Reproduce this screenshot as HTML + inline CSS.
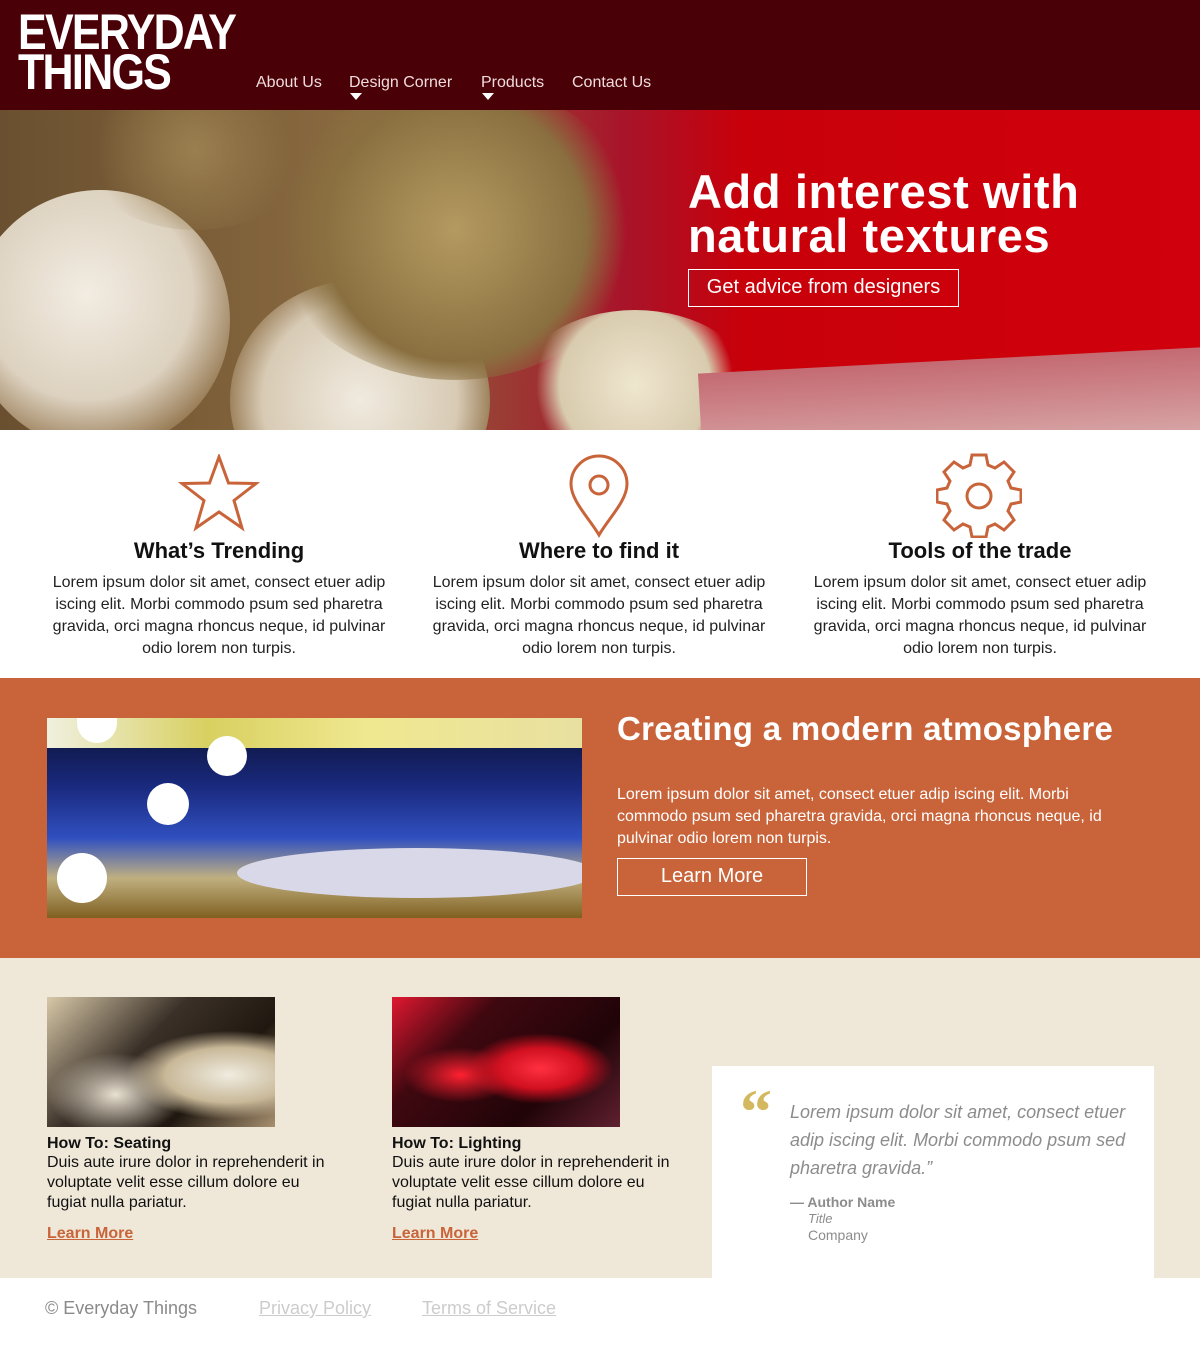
<!DOCTYPE html>
<html><head><meta charset="utf-8"><style>
*{margin:0;padding:0;box-sizing:border-box}
body{width:1200px;height:1350px;overflow:hidden;font-family:"Liberation Sans",sans-serif;background:#fff;position:relative}
.abs{position:absolute}
header{position:absolute;left:0;top:0;width:1200px;height:110px;background:#4a0007}
.logo{position:absolute;left:18px;top:12px;color:#fff;font-weight:bold;font-size:50px;line-height:40px;letter-spacing:-2px;transform:scaleX(.86);transform-origin:left top}
nav a{position:absolute;top:74px;color:#f0dcdc;font-size:16px;text-decoration:none}
.tri{position:absolute;top:93px;width:0;height:0;border-left:6px solid transparent;border-right:6px solid transparent;border-top:7px solid #fff}
.hero{position:absolute;left:0;top:110px;width:1200px;height:320px;overflow:hidden;
background:linear-gradient(90deg,#6a5030 0%,#8a6a40 30%,#a8142a 52%,#c8000a 62%,#d0000c 100%)}
.feat{position:absolute;top:538px;width:350px;text-align:center}
.feat h3{font-size:22px;color:#111;margin-bottom:8px}
.feat p{font-size:16px;line-height:22px;color:#222}
.orange{position:absolute;left:0;top:678px;width:1200px;height:280px;background:#c9643a}
.beige{position:absolute;left:0;top:958px;width:1200px;height:320px;background:#efe8d9}
.card h4{font-size:16px;color:#111;margin-top:8px}
.card p{font-size:16px;line-height:20px;color:#111}
.card a{display:block;margin-top:12px;color:#c9643a;font-weight:bold;font-size:16px;text-decoration:underline}
</style></head><body>
<div class="hero">
 <div class="abs" style="left:-30px;top:80px;width:260px;height:260px;border-radius:50%;background:radial-gradient(circle at 45% 40%,#f2ece2 0,#ddd2c0 50%,#8a6a40 80%)"></div>
 <div class="abs" style="left:230px;top:170px;width:260px;height:240px;border-radius:50%;background:radial-gradient(circle at 50% 50%,#f0eadf 0,#d8cbb5 55%,#8a6a40 80%)"></div>
 <div class="abs" style="left:270px;top:-30px;width:370px;height:300px;border-radius:50%;background:radial-gradient(circle,#b49a60 0,#8a7040 55%,rgba(120,90,50,0) 72%)"></div>
 <div class="abs" style="left:80px;top:-40px;width:230px;height:160px;border-radius:50%;background:radial-gradient(circle,#9a8050 0,rgba(120,90,50,0) 70%)"></div>
 <div class="abs" style="left:520px;top:200px;width:230px;height:150px;border-radius:50%;background:radial-gradient(circle,#efe6cf 0,#d8cbae 55%,rgba(200,180,150,0) 72%)"></div>
 <div class="abs" style="left:700px;top:250px;width:520px;height:90px;background:linear-gradient(180deg,#c46a72,#d8a8a8);transform:rotate(-3deg)"></div>
 <div class="abs" style="left:688px;top:60px;color:#fff;font-weight:bold;font-size:47px;line-height:44px;letter-spacing:.6px">Add interest with<br>natural textures</div>
 <div class="abs" style="left:688px;top:159px;width:271px;height:38px;border:1.5px solid #fff;color:#fff;font-size:20px;line-height:35px;text-align:center">Get advice from designers</div>
</div>
<header>
 <div class="logo">EVERYDAY<br>THINGS</div>
 <nav><a style="left:256px">About Us</a><a style="left:349px">Design Corner</a><a style="left:481px">Products</a><a style="left:572px">Contact Us</a></nav>
 <div class="tri" style="left:350px"></div><div class="tri" style="left:482px"></div>
</header>
<svg class="abs" style="left:178px;top:454px" width="82" height="78" viewBox="0 0 82 78"><polygon points="41,3 50.5,29 78,29.5 56,46.5 64,74 41,58 18,74 26,46.5 4,29.5 31.5,29" fill="none" stroke="#c9643a" stroke-width="3"/></svg>
<svg class="abs" style="left:568px;top:453px" width="62" height="86" viewBox="0 0 62 86"><path d="M31 82 C22 66 3 48 3 31 A28 28 0 0 1 59 31 C59 48 40 66 31 82Z" fill="none" stroke="#c9643a" stroke-width="3"/><circle cx="31" cy="32" r="9" fill="none" stroke="#c9643a" stroke-width="3"/></svg>
<svg class="abs" style="left:936px;top:452px" width="86" height="86" viewBox="-43 -43 86 86"><g fill="none" stroke="#c9643a" stroke-width="3">
<polygon points="-7,-40 7,-40 9,-30 16,-27 25,-33 35,-23 29,-14 32,-7 42,-5 42,7 32,9 29,16 35,25 25,35 16,29 9,32 7,42 -7,42 -9,32 -16,29 -25,35 -35,25 -29,16 -32,9 -42,7 -42,-5 -32,-7 -29,-14 -35,-23 -25,-33 -16,-27 -9,-30"/>
<circle cx="0" cy="1" r="12"/></g></svg>
<div class="feat" style="left:44px"><h3>What’s Trending</h3><p>Lorem ipsum dolor sit amet, consect etuer adip iscing elit. Morbi commodo psum sed pharetra gravida, orci magna rhoncus neque, id pulvinar odio lorem non turpis.</p></div>
<div class="feat" style="left:424px"><h3>Where to find it</h3><p>Lorem ipsum dolor sit amet, consect etuer adip iscing elit. Morbi commodo psum sed pharetra gravida, orci magna rhoncus neque, id pulvinar odio lorem non turpis.</p></div>
<div class="feat" style="left:805px"><h3>Tools of the trade</h3><p>Lorem ipsum dolor sit amet, consect etuer adip iscing elit. Morbi commodo psum sed pharetra gravida, orci magna rhoncus neque, id pulvinar odio lorem non turpis.</p></div>
<div class="orange">
 <div class="abs" style="left:47px;top:40px;width:535px;height:200px;overflow:hidden;background:linear-gradient(180deg,#0a1030 0%,#1a2a80 35%,#3050c0 60%,#c0b080 80%,#806020 100%)">
  <div class="abs" style="left:0;top:0;width:535px;height:30px;background:linear-gradient(90deg,#f0f0e0,#d8d060 30%,#f0e890 60%,#e8e0a0)"></div>
  <div class="abs" style="left:190px;top:130px;width:360px;height:50px;border-radius:50%;background:#d8d8e8"></div>
  <div class="abs" style="left:100px;top:65px;width:42px;height:42px;border-radius:50%;background:#fff"></div>
  <div class="abs" style="left:160px;top:18px;width:40px;height:40px;border-radius:50%;background:#fff"></div>
  <div class="abs" style="left:10px;top:135px;width:50px;height:50px;border-radius:50%;background:#fff"></div>
  <div class="abs" style="left:30px;top:0;width:40px;height:25px;border-radius:0 0 20px 20px;background:#fff"></div>
 </div>
 <div class="abs" style="left:617px;top:32px;color:#fff;font-weight:bold;font-size:33px;letter-spacing:.3px">Creating a modern atmosphere</div>
 <div class="abs" style="left:617px;top:106px;width:520px;color:#fff;font-size:16px;line-height:22px">Lorem ipsum dolor sit amet, consect etuer adip iscing elit. Morbi commodo psum sed pharetra gravida, orci magna rhoncus neque, id pulvinar odio lorem non turpis.</div>
 <div class="abs" style="left:617px;top:180px;width:190px;height:38px;border:1.5px solid #fff;color:#fff;font-size:20px;line-height:35px;text-align:center">Learn More</div>
</div>
<div class="beige">
 <div class="card abs" style="left:47px;top:39px;width:290px">
  <div style="width:228px;height:130px;background:radial-gradient(ellipse at 80% 60%,#f0ece0 0,#c8b898 25%,rgba(0,0,0,0) 40%),radial-gradient(ellipse at 30% 75%,#e8e0d0 0,rgba(0,0,0,0) 30%),linear-gradient(135deg,#d8c8a8,#3a3028 40%,#201810 70%,#a89070)"></div>
  <h4>How To: Seating</h4><p>Duis aute irure dolor in reprehenderit in voluptate velit esse cillum dolore eu fugiat nulla pariatur.</p><a>Learn More</a>
 </div>
 <div class="card abs" style="left:392px;top:39px;width:290px">
  <div style="width:228px;height:130px;background:radial-gradient(ellipse at 65% 55%,#ff3040 0,#d01020 20%,rgba(0,0,0,0) 35%),radial-gradient(ellipse at 30% 60%,#ff2030 0,rgba(0,0,0,0) 25%),linear-gradient(135deg,#e01830 0,#400810 30%,#200408 70%,#602030)"></div>
  <h4>How To: Lighting</h4><p>Duis aute irure dolor in reprehenderit in voluptate velit esse cillum dolore eu fugiat nulla pariatur.</p><a>Learn More</a>
 </div>
 <div class="abs" style="left:712px;top:108px;width:442px;height:212px;background:#fff">
  <div class="abs" style="left:28px;top:14px;color:#d4b860;font-family:'Liberation Serif',serif;font-size:64px;font-weight:bold;line-height:64px">“</div>
  <div class="abs" style="left:78px;top:32px;width:350px;color:#8c8c8c;font-style:italic;font-size:18px;line-height:28px">Lorem ipsum dolor sit amet, consect etuer adip iscing elit. Morbi commodo psum sed pharetra gravida.”</div>
  <div class="abs" style="left:78px;top:128px;color:#8c8c8c;font-size:14px;font-weight:bold">— Author Name</div>
  <div class="abs" style="left:96px;top:145px;color:#8c8c8c;font-size:13px;font-style:italic">Title</div>
  <div class="abs" style="left:96px;top:161px;color:#8c8c8c;font-size:14px">Company</div>
 </div>
</div>
<div class="abs" style="left:45px;top:1298px;font-size:18px;color:#8a8a8a">© Everyday Things</div>
<div class="abs" style="left:259px;top:1298px;font-size:18px;color:#ccc;text-decoration:underline">Privacy Policy</div>
<div class="abs" style="left:422px;top:1298px;font-size:18px;color:#ccc;text-decoration:underline">Terms of Service</div>
</body></html>
